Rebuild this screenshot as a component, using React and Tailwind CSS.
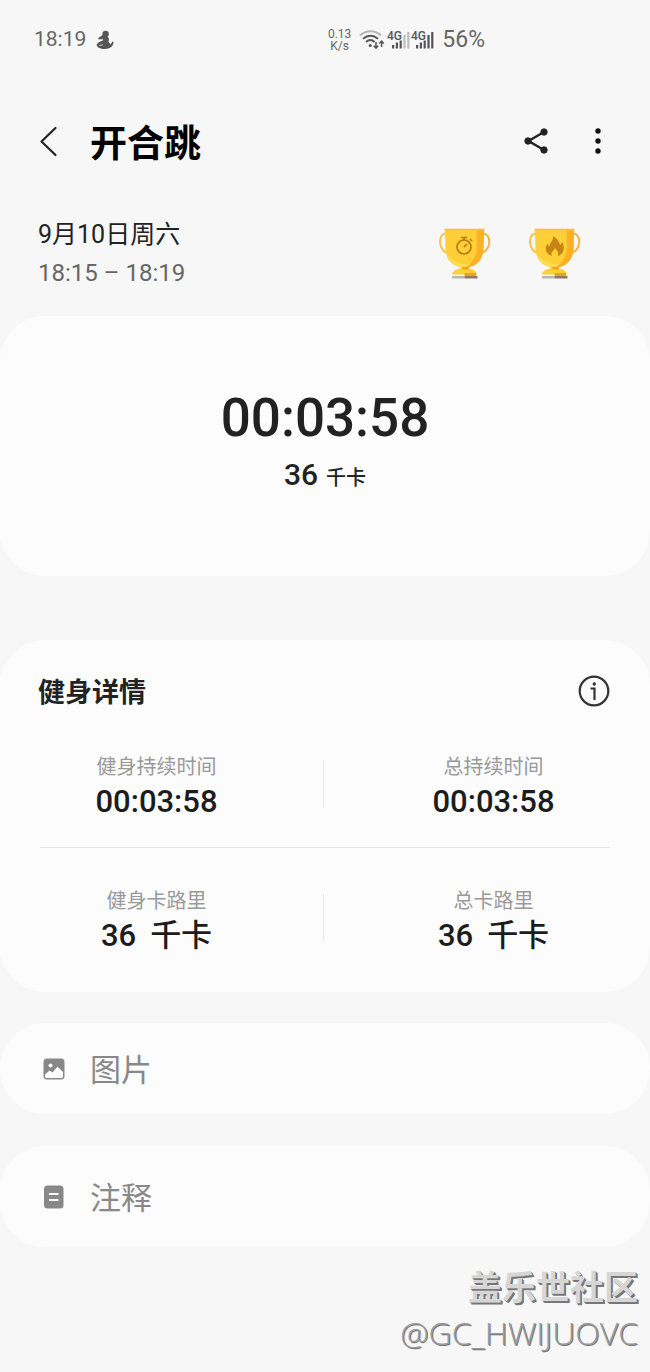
const stats = [
  [
    { id: 'workout-time', label: '健身持续时间', value: '00:03:58' },
    { id: 'total-time', label: '总持续时间', value: '00:03:58' },
  ],
  [
    { id: 'workout-calories', label: '健身卡路里', value: '36', unit: '千卡' },
    { id: 'total-calories', label: '总卡路里', value: '36', unit: '千卡' },
  ],
];

const NotificationIcon = () => (
  <svg className="h-5 w-[18px]" viewBox="0 0 18 20" fill="#555" aria-hidden="true">
    <circle cx="9.6" cy="4" r="3.2" />
    <path d="M2 8.2 7.2 4.6 8.6 6.2 12 7C13.500 9 13 10.600 12.400 11.800L14.600 14.600 16.400 11.600 17.500 12C17.600 16 14 19 9 19 4 19 1 17.600.6 14.800 2 12 4.500 11.200 6.400 11L7 9 3 9.400Z" />
    <path d="M3 15.600 7 14.800" stroke="#f7f7f7" strokeWidth=".7" />
  </svg>
);

const WifiIcon = () => (
  <svg className="h-5 w-[26px]" viewBox="0 0 26 20" fill="none" stroke="#555" strokeWidth="1.900" aria-hidden="true">
    <path d="M1 5.500C7-.2 16-.2 22 5.500" stroke="#b5b5b5" />
    <path d="M4 8.800C8.500 4.800 14.500 4.800 19 8.800" />
    <path d="M7 12C9.700 9.600 13 9.600 15.600 12" />
    <circle cx="11.200" cy="15.400" r="1.500" fill="#555" stroke="none" />
    <path d="M17 12V18M14.800 15.800 17 18.200 19.200 15.800M22.600 17V11.500M20.400 13.600 22.600 11.200 24.800 13.600" strokeWidth="1.500" />
  </svg>
);

const SignalIcon = ({ weak }) => (
  <svg className="h-5 w-[23px]" viewBox="0 0 23 20" fill="#555" aria-hidden="true">
    <text x="0" y="9.500" fontSize="12" fontWeight="500" fontFamily="Roboto, sans-serif">4G</text>
    <rect x="5" y="15" width="2.200" height="3.500" />
    <rect x="8.800" y="12.500" width="2.200" height="6" />
    <rect x="12.600" y="10.500" width="2.200" height="8" />
    <rect x="16.400" y="5" width="2.200" height="13.500" fill={weak ? '#bdbdbd' : '#555'} />
    <rect x="20.200" y="2" width="2.200" height="16.500" fill={weak ? '#bdbdbd' : '#555'} />
  </svg>
);

const Trophy = ({ label, children }) => (
  <svg className="h-[52px] w-[52px]" viewBox="0 0 52 52" role="img" aria-label={label}>
    <g fill="none" strokeWidth="2">
      <path d="M8 5.500C-2 4.500-1.500 24.500 11 25.500" stroke="#f7c44b" />
      <path d="M43 5.500C53.500 4.500 53 24.500 40 25.500" stroke="#f2b63c" />
    </g>
    <path d="M6 1.500H45L44.500 20C44 33 36 39.500 25.500 39.500S7 33 6.500 20Z" fill="#ffcf37" />
    <path d="M37.500 1.500H45L44.500 20C44 33 36 39.500 25.500 39.500 33 36 38 28 38 18Z" fill="#fdb022" />
    <path d="M8.500 26C13 33 20 36 31 36.500L25.500 39.500C17 39.500 11 34.500 8.500 26Z" fill="#ffdc50" />
    <path d="M5.500.8H45.500V2.400H5.500Z" fill="#ffbd3d" />
    <path d="M21 39H30L29.500 40.500C34 41 38 43.500 38 46.500H13C13 43.500 17 41 21.500 40.500Z" fill="#ffcf37" />
    <path d="M23 39H30L29.500 41.500H24Z" fill="#efa51b" />
    <path d="M25.500 45H37V48H25.500Z" fill="#e8a41f" />
    <path d="M13 48H25.500V50.500H13Z" fill="#bdb6ac" />
    <path d="M25.500 48H38.500V50.500H25.500Z" fill="#8b7968" />
    {children}
  </svg>
);

const ListCard = ({ text, className, children }) => (
  <button type="button" className={`flex w-full items-center rounded-[45px] bg-[#fcfcfc] pl-[43px] text-left ${className}`}>
    {children}
    <span className="ml-[25px] font-['Noto_Sans_CJK_SC',sans-serif] text-[31px] text-[#888]">{text}</span>
  </button>
);

const Stat = ({ item }) => (
  <div className="flex flex-col items-center">
    <dt className="text-[20px] leading-[36px] text-[#999]">{item.label}</dt>
    <dd className="flex items-baseline gap-3.5 text-[31px] leading-[34px] font-medium text-[#1c1c1c]">
      {item.value}
      {item.unit && <span>{item.unit}</span>}
    </dd>
  </div>
);

const App = () => {
  return (
    <div className="flex min-h-screen flex-col bg-[#f7f7f7] pb-4 font-[Roboto,'Noto_Sans_CJK_SC',sans-serif]">
      <div className="flex h-20 items-center justify-between pr-[165px] pl-[34px] text-[#666]">
        <div className="flex items-center gap-2.5">
          <span className="text-[21px]">18:19</span>
          <NotificationIcon />
        </div>
        <div className="flex items-center">
          <span className="mr-2 text-center text-[12px] leading-[12px]">0.13<br />K/s</span>
          <WifiIcon />
          <div className="mr-2 ml-0.5 flex gap-px">
            <SignalIcon weak />
            <SignalIcon />
          </div>
          <span className="text-[23px]">56%</span>
        </div>
      </div>

      <header className="flex h-[122px] items-center pr-10 pl-[38px]">
        <button type="button" aria-label="返回" className="mr-8">
          <svg className="h-8 w-5" viewBox="0 0 20 32" fill="none" stroke="#222" strokeWidth="2.200" strokeLinecap="round" strokeLinejoin="round">
            <path d="M17.500 3 3.500 16.500 17.500 30" />
          </svg>
        </button>
        <h1 className="font-['Noto_Sans_CJK_SC',sans-serif] text-[37px] leading-[48px] font-bold text-black">开合跳</h1>
        <button type="button" aria-label="分享" className="ml-auto">
          <svg className="h-7 w-7" viewBox="0 0 28 28" fill="#222" stroke="#222">
            <path d="M22 5 6.500 14 22 23" fill="none" strokeWidth="2.400" />
            <circle cx="22" cy="5" r="3.200" />
            <circle cx="6" cy="14" r="3.200" />
            <circle cx="22" cy="23" r="3.200" />
          </svg>
        </button>
        <button type="button" aria-label="更多" className="ml-9">
          <svg className="h-7 w-6" viewBox="0 0 24 28" fill="#111">
            <circle cx="12" cy="4" r="2.700" />
            <circle cx="12" cy="14" r="2.700" />
            <circle cx="12" cy="24" r="2.700" />
          </svg>
        </button>
      </header>

      <main>
        <section className="flex items-center justify-between pt-3.5 pr-[69px] pb-6 pl-[38px]">
          <div className="leading-[38px]">
            <p className="text-[25px] text-[#222]">9月10日周六</p>
            <p className="text-[24px] text-[#666]">18:15 – 18:19</p>
          </div>
          <div className="flex gap-[38px]">
            <Trophy label="时长奖杯">
              <g fill="none" stroke="#b8790f" strokeWidth="1.700">
                <circle cx="25" cy="19" r="7" />
                <path d="M22 9.500H28M25 9.500V12M31 11 33 13M25 19 28 16" />
              </g>
            </Trophy>
            <Trophy label="卡路里奖杯">
              <path d="M24 8C29.500 11.500 30 15 31.500 17L33.500 14C36 20 35 26 29 28 30 24 28 23 26 20 25 23 21 24 23 28 17 26 15.500 21 18 16L20.500 18.500C20.500 15 24.500 13 24 8Z" fill="#c88315" />
            </Trophy>
          </div>
        </section>

        <section className="rounded-[45px] bg-[#fcfcfc] pt-[70px] pb-[73px] text-center text-[#222]">
          <p className="text-[53px] leading-[64px] font-medium">00:03:58</p>
          <p className="flex items-baseline justify-center gap-2 text-[30px] leading-[50px] font-medium">
            36 <span className="text-[20px]">千卡</span>
          </p>
        </section>

        <section className="mt-16 rounded-[45px] bg-[#fcfcfc] pt-[27px] pb-[39px]">
          <div className="flex h-12 items-center justify-between pr-10 pl-[38px]">
            <h2 className="font-['Noto_Sans_CJK_SC',sans-serif] text-[27px] font-bold text-[#222]">健身详情</h2>
            <button type="button" aria-label="说明">
              <svg className="h-8 w-8" viewBox="0 0 32 32" fill="none" stroke="#333" strokeWidth="2.200">
                <circle cx="16" cy="16" r="14.300" />
                <path d="M12.500 13.500H16.500V25" />
                <circle cx="16.300" cy="9" r="1.700" fill="#333" stroke="none" />
              </svg>
            </button>
          </div>
          <dl className="mt-[34px] grid grid-cols-[1fr_24px_1fr]">
            <Stat item={stats[0][0]} />
            <div className="my-auto ml-2.5 h-12 w-px bg-[#e8e8e8]" />
            <Stat item={stats[0][1]} />
          </dl>
          <hr className="mx-10 mt-7 mb-[35px] border-[#e4e4e4]" />
          <dl className="grid grid-cols-[1fr_24px_1fr]">
            <Stat item={stats[1][0]} />
            <div className="my-auto ml-2.5 h-12 w-px bg-[#e8e8e8]" />
            <Stat item={stats[1][1]} />
          </dl>
        </section>

        <ListCard text="图片" className="mt-[31px] h-[91px]">
          <svg className="h-[22px] w-[22px]" viewBox="0 0 22 22" aria-hidden="true">
            <rect x=".5" y=".5" width="21" height="21" rx="3.500" fill="#888" />
            <circle cx="7.500" cy="7.500" r="2" fill="#fcfcfc" />
            <path d="M2 16.500 6.500 12.500 9.500 14.500 14.500 8.500 20 14V18.500Q20 20 18.500 20H3.500Q2 20 2 18.500Z" fill="#fcfcfc" />
          </svg>
        </ListCard>
        <ListCard text="注释" className="mt-8 h-[101px]">
          <svg className="h-6 w-[22px]" viewBox="0 0 22 24" aria-hidden="true">
            <rect x="1" y=".5" width="19.500" height="23" rx="3.500" fill="#888" />
            <path d="M6 9H15.500M6 15H15.500" stroke="#fcfcfc" strokeWidth="2" />
          </svg>
        </ListCard>
      </main>

      <footer className="mt-4 flex flex-col items-end pr-3">
        <p className="text-[34px] leading-[50px] font-bold text-[#d6d6d6] [text-shadow:1px_1px_0_#777,2px_2px_0_#777]">盖乐世社区</p>
        <p className="font-['Open_Sans',sans-serif] text-[32px] leading-[40px] font-light text-[#999] [text-shadow:1px_1px_0_#777]">@GC_HWIJUOVC</p>
      </footer>
    </div>
  );
};

export default App;
